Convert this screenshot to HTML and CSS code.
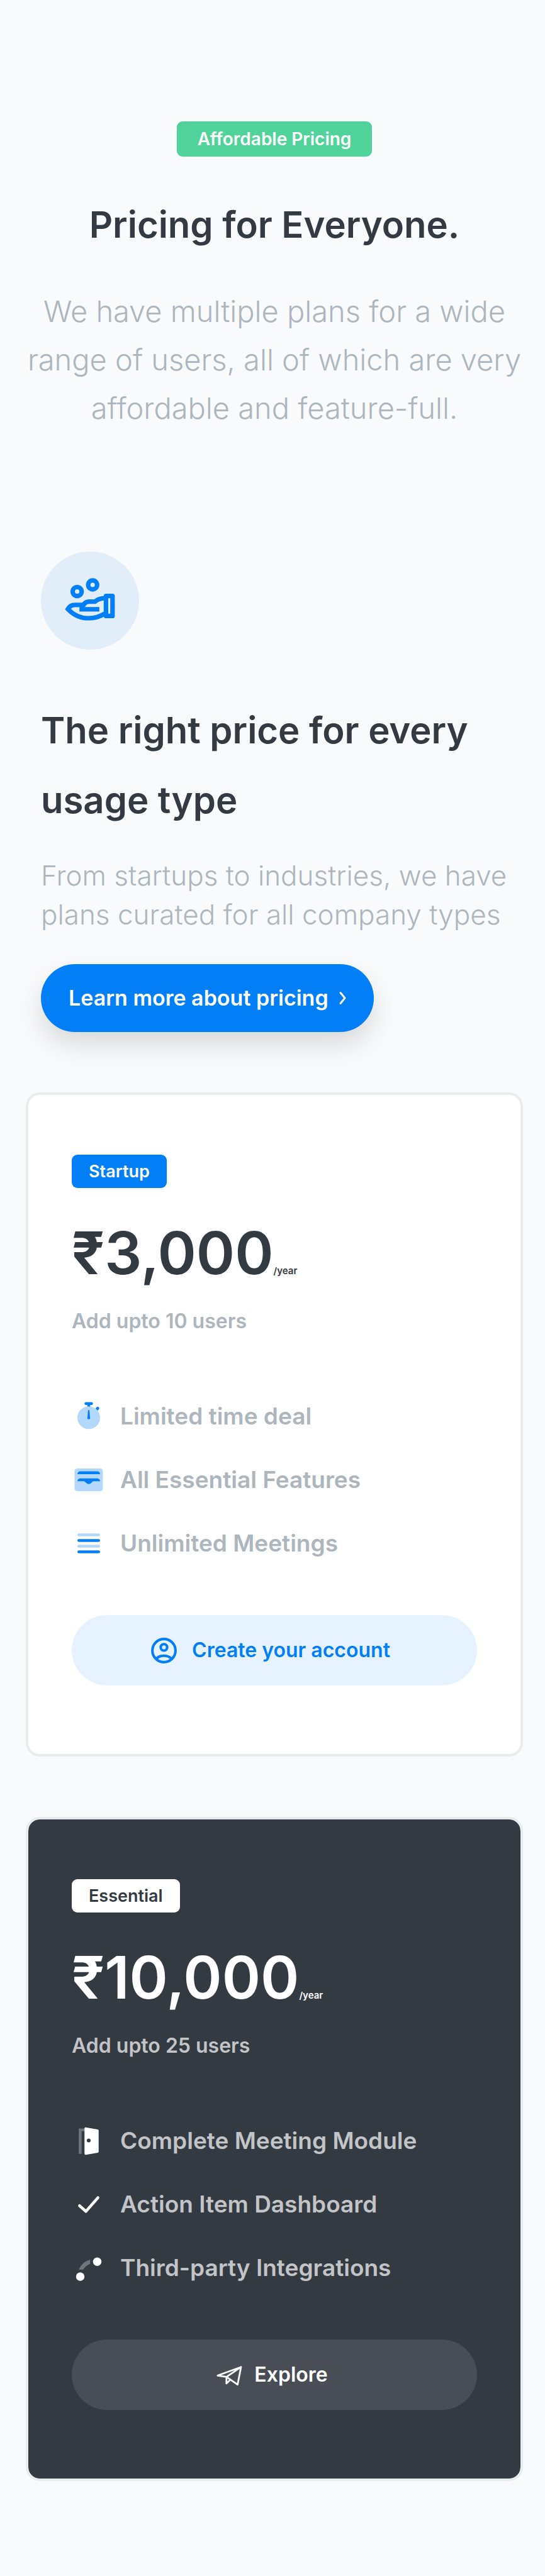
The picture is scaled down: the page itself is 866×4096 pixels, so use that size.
FILE: index.html
```html
<!DOCTYPE html>
<html lang="en">
<head>
<meta charset="utf-8">
<meta name="viewport" content="width=device-width, initial-scale=1">
<title>Pricing for Everyone</title>
<link rel="stylesheet" href="styles.css">
</head>
<body>
<main class="page">
  <header class="hero">
    <span class="tag tag-green">Affordable Pricing</span>
    <h1 class="hero-title">Pricing for Everyone.</h1>
    <p class="hero-lead">We have multiple plans for a wide range of users, all of which are very affordable and feature-full.</p>
  </header>

  <section class="intro">
    <div class="intro-icon">
      <svg viewBox="0 0 780 780" fill="none" stroke="currentColor" stroke-width="36" aria-hidden="true">
        <circle cx="288" cy="318" r="35.5"/>
        <circle cx="411" cy="265" r="35.5"/>
        <rect x="517" y="353" width="52" height="159" stroke-linejoin="round"/>
        <path d="M508 493Q450 530 376 530Q285 530 214 457Q232 424 270 424H336"/>
        <path d="M324 459Q340 398 382 398H430Q462 371 508 371"/>
        <path d="M306 459H464"/>
      </svg>
    </div>
    <h2 class="intro-title">The right price for every usage type</h2>
    <p class="intro-text">From startups to industries, we have plans curated for all company types</p>
    <a class="cta" href="#plans">Learn more about pricing
      <svg class="cta-chevron" viewBox="0 0 11 22" fill="none" stroke="currentColor" stroke-width="3" stroke-linecap="round" stroke-linejoin="round" aria-hidden="true"><path d="M2 2.500L9 11L2 19.500"/></svg>
    </a>
  </section>

  <div class="plans" id="plans">
    <article class="plan">
      <span class="tag tag-blue">Startup</span>
      <p class="price">₹3,000<small class="period">/year</small></p>
      <p class="seats">Add upto 10 users</p>
      <ul class="features">
        <li class="feature">
          <svg class="feature-icon" viewBox="0 0 24 24" fill="currentColor" aria-hidden="true">
            <circle class="soft" cx="12" cy="13" r="8"/>
            <path d="M10 2H14A1 1 0 0 1 14 4H13V5.100H11V4H10A1 1 0 0 1 10 2Z"/>
            <path d="M16.800 6.400L17.600 5.600A1 1 0 0 1 19.100 7.100L18.200 8A8 8 0 0 0 16.800 6.400Z"/>
            <path d="M11.500 8Q11.500 7.500 12 7.500T12.500 8L13 13.500Q13 14 12.500 14H11.500Q11 14 11 13.500Z"/>
          </svg>Limited time deal</li>
        <li class="feature">
          <svg class="feature-icon" viewBox="0 0 24 24" fill="currentColor" aria-hidden="true">
            <rect class="soft" x="2" y="4" width="20" height="16" rx="2"/>
            <path d="M4 8A2 2 0 0 1 6 6H18A2 2 0 0 1 20 8Z"/>
            <path d="M4 13A2 2 0 0 1 6 11H18A2 2 0 0 1 20 13H15.500Q14.800 13 14 14Q13.200 15 12 15T10 14Q9.200 13 8.500 13Z"/>
          </svg>All Essential Features</li>
        <li class="feature">
          <svg class="feature-icon" viewBox="0 0 24 24" fill="currentColor" aria-hidden="true">
            <rect class="soft" x="4" y="5" width="16" height="2" rx="1"/>
            <rect x="4" y="9" width="16" height="2" rx="1"/>
            <rect class="soft" x="4" y="13" width="16" height="2" rx="1"/>
            <rect x="4" y="17" width="16" height="2" rx="1"/>
          </svg>Unlimited Meetings</li>
      </ul>
      <button class="action" type="button">
        <svg class="action-icon" viewBox="0 0 24 24" fill="none" stroke="currentColor" stroke-width="2" aria-hidden="true">
          <circle cx="12" cy="12" r="9"/>
          <circle cx="12" cy="9.500" r="2.500"/>
          <path d="M6 18.400C9 15.200 15 15.200 18 18.400"/>
        </svg>Create your account</button>
    </article>

    <article class="plan plan-dark">
      <span class="tag tag-white">Essential</span>
      <p class="price">₹10,000<small class="period">/year</small></p>
      <p class="seats">Add upto 25 users</p>
      <ul class="features">
        <li class="feature">
          <svg class="feature-icon" viewBox="0 0 24 24" fill="currentColor" aria-hidden="true">
            <path class="soft" d="M5 3.300H9V5.200H7V21.200H5Z"/>
            <path fill-rule="evenodd" d="M9 3.300Q9 2.400 10 2.500L18.400 4Q19 4.100 19 4.700V19.700Q19 20.300 18.400 20.400L10 21.900Q9 22 9 21.100ZM12 10.400A1.350 1.350 0 1 0 12 13.100A1.350 1.350 0 1 0 12 10.400Z"/>
          </svg>Complete Meeting Module</li>
        <li class="feature">
          <svg class="feature-icon" viewBox="0 0 24 24" fill="none" stroke="currentColor" stroke-width="2" stroke-linecap="round" stroke-linejoin="round" aria-hidden="true"><path d="M5.500 13L10 17L18.500 7.300"/></svg>Action Item Dashboard</li>
        <li class="feature">
          <svg class="feature-icon" viewBox="0 0 24 24" fill="currentColor" aria-hidden="true">
            <path class="soft" d="M5 13.200Q7 8 13 6.200V9.200Q10 10.200 8.100 13.200Z"/>
            <circle cx="18" cy="7.700" r="3"/>
            <circle cx="6" cy="18.200" r="3"/>
          </svg>Third-party Integrations</li>
      </ul>
      <button class="action" type="button">
        <svg class="action-icon" viewBox="0 0 49 49" fill="none" stroke="currentColor" stroke-width="2.800" stroke-linecap="round" stroke-linejoin="round" aria-hidden="true">
          <path d="M48 11.700L10.800 25.300L24.900 27.300L48 11.700L42.500 39.700L24.900 27.300L24.700 37.900L30.900 32"/>
        </svg>Explore</button>
    </article>
  </div>
</main>
</body>
</html>
```
FILE: styles.css
```css
:root {
  --bg: #f8fafc;
  --ink: #343a42;
  --muted: #adb5bd;
  --blue: #027ff6;
  --line: #e9ecef;
}

* {
  box-sizing: border-box;
}

body {
  margin: 0;
  background: var(--bg);
  color: var(--ink);
  font-family: "Inter", "Noto Sans", sans-serif;
}

h1, h2, p, ul {
  margin: 0;
}

svg {
  display: block;
  flex: none;
  overflow: visible;
}

.page {
  padding: 193px 35px 147px 41px;
}

.tag {
  padding: 0 27px;
  border-radius: 9px;
  font-size: 27px;
  font-weight: 600;
  line-height: 53px;
}

.tag-green {
  padding: 0 33px;
  background: #50d39a;
  color: #fff;
  font-size: 28px;
  line-height: 56px;
}

.tag-blue {
  background: var(--blue);
  color: #fff;
}

.tag-white {
  background: #fff;
  color: var(--ink);
}

.hero {
  display: flex;
  flex-direction: column;
  align-items: center;
  text-align: center;
}

.hero-title {
  margin-top: 68px;
  font-size: 58px;
  font-weight: 600;
  line-height: 80px;
}

.hero-lead {
  margin-top: 59px;
  color: var(--muted);
  font-size: 47px;
  font-weight: 300;
  line-height: 77px;
}

.intro {
  display: flex;
  flex-direction: column;
  align-items: flex-start;
  margin-top: 190px;
  padding-left: 24px;
}

.intro-icon {
  width: 156px;
  height: 156px;
  border-radius: 50%;
  background: #e1edf9;
  color: var(--blue);
}

.intro-title {
  margin-top: 73px;
  font-size: 58px;
  font-weight: 600;
  line-height: 111px;
}

.intro-text {
  margin-top: 33px;
  color: var(--muted);
  font-size: 44px;
  font-weight: 300;
  line-height: 62px;
}

.cta {
  display: flex;
  align-items: center;
  gap: 17px;
  margin-top: 48px;
  padding: 0 44px;
  border-radius: 54px;
  background: var(--blue);
  box-shadow: 0 20px 40px rgba(0, 0, 0, 0.13);
  color: #fff;
  font-size: 34px;
  font-weight: 600;
  line-height: 108px;
  text-decoration: none;
}

.cta-chevron {
  width: 11px;
  height: 22px;
}

.plans {
  display: flex;
  flex-direction: column;
  gap: 96px;
  margin-top: 96px;
}

.plan {
  display: flex;
  flex-direction: column;
  align-items: flex-start;
  padding: 95px 69px 109px;
  border: 4px solid var(--line);
  border-radius: 22px;
  background: #fff;
}

.price {
  margin-top: 53px;
  font-size: 93px;
  font-weight: 600;
  line-height: 100px;
}

.period {
  font-size: 15px;
  line-height: 16px;
}

.seats {
  margin-top: 37px;
  color: var(--muted);
  font-size: 32px;
  font-weight: 600;
  line-height: 44px;
}

.features {
  display: flex;
  flex-direction: column;
  gap: 47px;
  margin-top: 102px;
  padding: 0;
  list-style: none;
}

.feature {
  display: flex;
  align-items: center;
  gap: 23px;
  color: var(--muted);
  font-size: 37px;
  font-weight: 600;
  line-height: 54px;
}

.feature-icon {
  width: 54px;
  height: 54px;
  color: var(--blue);
}

.soft {
  opacity: 0.3;
}

.action {
  display: flex;
  align-items: center;
  justify-content: center;
  gap: 20px;
  width: 100%;
  margin-top: 87px;
  padding: 0 16px 0 0;
  border: 0;
  border-radius: 56px;
  background: #e6f2ff;
  color: var(--blue);
  font-family: inherit;
  font-size: 32px;
  font-weight: 600;
  line-height: 112px;
}

.action-icon {
  width: 49px;
  height: 49px;
}

.plan-dark {
  background: #343a42;
  background-clip: padding-box;
  color: #fff;
}

.plan-dark .seats,
.plan-dark .feature {
  color: #c2c4c7;
}

.plan-dark .feature-icon {
  color: #fff;
}

.plan-dark .action {
  background: #494d55;
  color: #fff;
}
```
